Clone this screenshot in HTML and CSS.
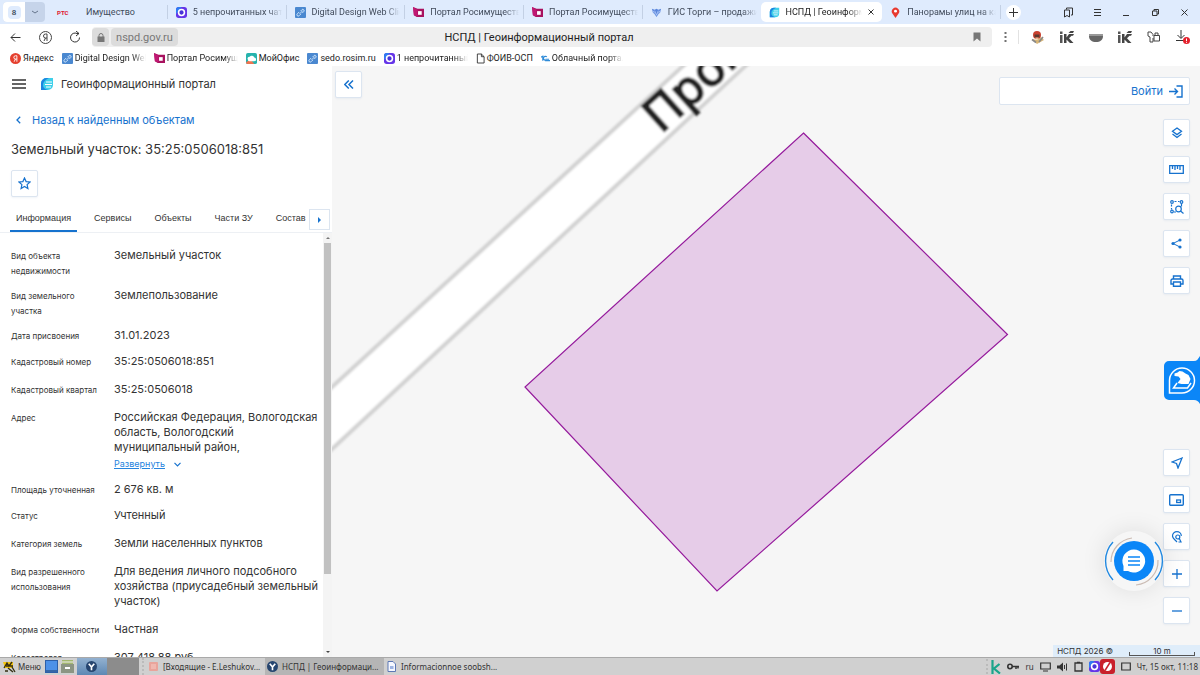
FILE: index.html
```html
<!DOCTYPE html>
<html lang="ru">
<head>
<meta charset="utf-8">
<title>НСПД | Геоинформационный портал</title>
<link rel="stylesheet" href="styles.css">
</head>
<body>
<svg class="defs" aria-hidden="true">
  <symbol id="i-link" viewBox="0 0 12 12"><rect width="12" height="12" rx="1" fill="#4a88d0"/><path d="M5 7.500l3.500-3.500M4.500 5.500L2.500 7.500a1.300 1.300 0 0 0 2 2l2-2M6 4.500l1.500-1.500a1.300 1.300 0 0 1 2 2L8 6.500" fill="none" stroke="#d8ebff"/></symbol>
  <symbol id="i-ros" viewBox="0 0 12 12"><path d="M0 0l5 2h7v9H4L1 9z" fill="#a8125f"/><path d="M5.500 4.500h4v4h-4z" fill="#fff"/><path d="M0 0l5 3v7L1 9z" fill="#c01873"/></symbol>
  <symbol id="i-chat" viewBox="0 0 12 12"><rect width="12" height="12" rx="3" fill="#6535e8"/><path d="M0 8V3a3 3 0 0 1 3-3h3z" fill="#2e7cf2"/><circle cx="6" cy="6" r="3.200" fill="#4833d8" stroke="#fff" stroke-width="1.700"/></symbol>
  <symbol id="i-nspd" viewBox="0 0 14 14"><path d="M1 13V6a5.500 5.500 0 0 1 5.500-5H13v7a5 5 0 0 1-5 5z" fill="#3fd0ea"/><path d="M1 13V6a5.500 5.500 0 0 1 5.500-5H9C5 3 3 5 3 8s2 4 5 5z" fill="#1d86e0"/><path d="M6 5h6M5 7.500h7M6 10h5" stroke="#fff" stroke-width="1"/></symbol>
  <symbol id="i-y" viewBox="0 0 12 12"><circle cx="6" cy="6" r="6" fill="#26456f"/><path d="M3 3l3 3.500L9 3M6 6v4" fill="none" stroke="#fff" stroke-width="1.800"/></symbol>
  <symbol id="i-k" viewBox="0 0 14 14"><path d="M0 5h2.500v8H0zM0 1.500h2.500V4H0z" fill="#555"/><path d="M4 4h2.500v3.500L9 4h5l-1 1.800h-1.500L9 8.300l4.500 4.700H10L6.500 9.500V13H4zM8.500 3l2-2H14l-1 2z" fill="#444"/></symbol>
</svg>

<header class="browser">
  <div class="tabbar">
    <div class="group"><button class="group-count"><span>8</span></button><button class="group-menu" aria-label="Список вкладок"><svg width="8" height="5" viewBox="0 0 8 5"><path d="M1 1l3 2 3-2" fill="none" stroke="#66758c"/></svg></button></div>
    <nav class="tabs" aria-label="Вкладки">
      <button class="tab"><span class="rts">РТС</span><span class="tab-text">Имущество</span></button>
      <button class="tab"><svg class="fav"><use href="#i-chat"/></svg><span class="tab-text fade">5 непрочитанных чатс</span></button>
      <button class="tab"><svg class="fav"><use href="#i-link"/></svg><span class="tab-text fade">Digital Design Web Clie</span></button>
      <button class="tab"><svg class="fav"><use href="#i-ros"/></svg><span class="tab-text fade">Портал Росимуществ</span></button>
      <button class="tab"><svg class="fav"><use href="#i-ros"/></svg><span class="tab-text fade">Портал Росимуществ</span></button>
      <button class="tab no-sep"><svg class="fav" viewBox="0 0 12 12"><path d="M1 2l3 1 2-1 2 1 3-1-1 4-2 2-2 3-2-3-2-2z" fill="#5a86dc"/><path d="M4 4l2 5 2-5M2 4l2 3M10 4L8 7" stroke="#cfe0ff" fill="none" stroke-width=".7"/></svg><span class="tab-text fade">ГИС Торги – продажи</span></button>
      <button class="tab active no-sep"><svg class="fav"><use href="#i-nspd"/></svg><span class="tab-text fade">НСПД | Геоинформ</span><svg width="6" height="6" viewBox="0 0 6 6"><path d="M.5.500l5 5M5.500.500l-5 5" stroke="#333"/></svg></button>
      <button class="tab"><svg class="fav" viewBox="0 0 12 12"><path d="M6 12L3 7.500a4 4 0 1 1 6 0z" fill="#e8392f"/><circle cx="6" cy="4.500" r="1.600" fill="#fff"/></svg><span class="tab-text fade">Панорамы улиц на кар</span></button>
    </nav>
    <button class="new-tab" aria-label="Новая вкладка"><svg width="9" height="9" viewBox="0 0 9 9"><path d="M4.500 0v9M0 4.500h9" stroke="#333"/></svg></button>
    <div class="window-buttons">
      <button aria-label="Коллекции"><svg width="11" height="11" viewBox="0 0 11 11"><path d="M3.500 2.500V1h6v7H8M1.500 3h5v7L4 8.500 1.500 10z" fill="none" stroke="#333"/></svg></button>
      <button aria-label="Меню"><svg width="9" height="9" viewBox="0 0 9 9"><path d="M1 1.500h7M1 4.500h7M1 7.500h7" stroke="#333"/></svg></button>
      <button aria-label="Свернуть"><svg width="9" height="9" viewBox="0 0 9 9"><path d="M1 7.500h6" stroke="#333"/></svg></button>
      <button aria-label="Восстановить"><svg width="9" height="9" viewBox="0 0 9 9"><path d="M1.500 3h4.500v4.500H1.500zM3 3V1.500h4.500V6H6" fill="none" stroke="#333"/></svg></button>
      <button aria-label="Закрыть"><svg width="9" height="9" viewBox="0 0 9 9"><path d="M1.500 1.500l6 6M7.500 1.500l-6 6" stroke="#333"/></svg></button>
    </div>
  </div>

  <div class="toolbar">
    <div class="nav-buttons">
      <button aria-label="Назад"><svg width="11" height="11" viewBox="0 0 11 11"><path d="M10.500 5.500H1M5 1.500l-4 4 4 4" fill="none" stroke="#333"/></svg></button>
      <button aria-label="Яндекс"><svg width="13" height="13" viewBox="0 0 13 13"><circle cx="6.500" cy="6.500" r="6" fill="none" stroke="#444"/><path d="M8 10V3H6.500a2 2 0 0 0 0 4H8M6.500 7L5 10" fill="none" stroke="#444"/></svg></button>
      <button aria-label="Обновить"><svg width="12" height="12" viewBox="0 0 12 12"><path d="M10.500 6.500A4.500 4.500 0 1 1 8 2.500h2M7 0l3 2.500L7 5" fill="none" stroke="#333"/></svg></button>
    </div>
    <div class="address">
      <button class="lock" aria-label="Защищённое соединение"><svg width="8" height="9" viewBox="0 0 8 9"><rect x=".5" y="3.500" width="7" height="5.500" fill="#777"/><path d="M2 4V2.500a2 2 0 0 1 4 0V4" fill="none" stroke="#777"/></svg></button>
      <button class="host">nspd.gov.ru</button>
      <span class="page-title">НСПД | Геоинформационный портал</span>
      <button class="save" aria-label="В закладки"><svg width="8" height="10" viewBox="0 0 8 10"><path d="M.5.500h7v9L4 6.500.5 9.500z" fill="#777"/></svg></button>
    </div>
    <button class="dots" aria-label="Ещё"><svg width="3" height="10" viewBox="0 0 3 10"><path d="M.5 1h2M.5 5h2M.5 9h2" stroke="#444" stroke-width="1.500"/></svg></button>
    <div class="extensions">
      <button aria-label="Расширение"><svg width="13" height="13" viewBox="0 0 13 13"><path d="M1 8l5 5 7-4-3-3-4 3z" fill="#d8b678"/><circle cx="6" cy="4" r="4" fill="#c9412f"/><path d="M3.500 3.500h5v3h-5z" fill="#5a3a30"/><path d="M4.500 6.500h3v2h-3z" fill="#e9b58c"/><path d="M1 8.500l4 3M8 11l4-5" stroke="#888" stroke-width="1.600"/></svg></button>
      <button aria-label="Защита"><svg width="14" height="14"><use href="#i-k"/></svg></button>
      <button aria-label="Маска"><svg width="14" height="9" viewBox="0 0 14 9"><path d="M0 1h14v2H0z" fill="#999"/><path d="M0 3h14c0 4-3 6-7 6S0 7 0 3z" fill="#666"/></svg></button>
      <button aria-label="Защита платежей"><svg width="14" height="14"><use href="#i-k"/></svg></button>
      <button aria-label="Расширения"><svg width="13" height="12" viewBox="0 0 13 12"><path d="M6 5V3.500L4 1H1v4l2 1v5h3V7M7 4.500h5.500V10H7zM8 4.500V2h3v2.500" fill="none" stroke="#444"/></svg></button>
      <button aria-label="Загрузки"><svg width="14" height="14" viewBox="0 0 14 14"><path d="M5 0v8M1.500 5L5 8.500 8.500 5M0 10.500h8" fill="none" stroke="#333"/><circle cx="10.500" cy="10.500" r="3.500" fill="#e4202c"/><path d="M10.500 8.500v2.500M10.500 11.800v1" stroke="#fff"/></svg></button>
    </div>
  </div>

  <nav class="bookmarks" aria-label="Закладки">
    <a href="#"><svg class="fav" viewBox="0 0 12 12"><circle cx="6" cy="6" r="6" fill="#e5402f"/><path d="M7.500 9.500V3H6a1.800 1.800 0 0 0 0 3.600h1.500M6 6.500L4.500 9.500" fill="none" stroke="#fff"/></svg><span>Яндекс</span></a>
    <a href="#"><svg class="fav"><use href="#i-link"/></svg><span class="cut fade">Digital Design Web</span></a>
    <a href="#"><svg class="fav"><use href="#i-ros"/></svg><span class="cut fade">Портал Росимущ</span></a>
    <a href="#"><svg class="fav" viewBox="0 0 12 12"><rect width="12" height="12" rx="2" fill="#26b3ad"/><path d="M0 10l5-3 4 5H2a2 2 0 0 1-2-2z" fill="#ee7450"/><path d="M2 7a2 2 0 0 1 2-3 3 3 0 0 1 5 1 2 2 0 0 1 0 4H4a2 2 0 0 1-2-2z" fill="#fff"/></svg><span>МойОфис</span></a>
    <a href="#"><svg class="fav"><use href="#i-link"/></svg><span>sedo.rosim.ru</span></a>
    <a href="#"><svg class="fav"><use href="#i-chat"/></svg><span class="cut fade">1 непрочитанный</span></a>
    <a href="#"><svg class="fav thin" viewBox="0 0 10 12"><path d="M1.500 1h4.500l3 3v7H1.500zM6 1v3h3" fill="none" stroke="#333"/></svg><span>ФОИВ-ОСП</span></a>
    <a href="#"><svg class="fav thin" viewBox="0 0 10 12"><path d="M0 4.500l2-1v5M5.500 8H5a2.200 2.200 0 1 1 1.500-3.800M4.500 8.300H10M5 6.800h4" fill="none" stroke="#2e8bd8" stroke-width="1.300"/></svg><span class="cut fade">Облачный портал</span></a>
  </nav>
</header>

<main class="workspace">
  <aside class="panel">
    <div class="panel-head">
      <div class="brand">
        <button class="burger" aria-label="Меню"><svg width="14" height="10" viewBox="0 0 14 10"><path d="M0 1h14M0 5h14M0 9h14" stroke="#333" stroke-width="1.500"/></svg></button>
        <svg class="logo" width="14" height="14"><use href="#i-nspd"/></svg>
        <span>Геоинформационный портал</span>
      </div>
      <a class="back" href="#"><svg width="5" height="8" viewBox="0 0 5 8"><path d="M4.200.800L1 4l3.200 3.200" fill="none" stroke="#1672ce" stroke-width="1.300"/></svg>Назад к найденным объектам</a>
      <h1>Земельный участок: 35:25:0506018:851</h1>
      <button class="tile" aria-label="В избранное"><svg width="13" height="13" viewBox="0 0 13 13"><path d="M6.500 1l1.600 3.600 3.900.400-2.900 2.600.8 3.900-3.400-2-3.400 2 .8-3.900L1 5l3.900-.400z" fill="none" stroke="#1672ce" stroke-width="1.200"/></svg></button>
    </div>
    <div class="sections">
      <button class="section current">Информация</button>
      <button class="section">Сервисы</button>
      <button class="section">Объекты</button>
      <button class="section">Части ЗУ</button>
      <button class="section last">Состав</button>
      <button class="more" aria-label="Дальше"><svg width="3" height="6" viewBox="0 0 3 6"><path d="M0 0l3 3-3 3z" fill="#1672ce"/></svg></button>
    </div>
    <div class="scroll">
      <dl class="facts">
        <div><dt>Вид объекта недвижимости</dt><dd>Земельный участок</dd></div>
        <div><dt>Вид земельного участка</dt><dd>Землепользование</dd></div>
        <div class="compact"><dt>Дата присвоения</dt><dd>31.01.2023</dd></div>
        <div><dt>Кадастровый номер</dt><dd>35:25:0506018:851</dd></div>
        <div><dt>Кадастровый квартал</dt><dd>35:25:0506018</dd></div>
        <div class="compact"><dt>Адрес</dt><dd>Российская Федерация, Вологодская область, Вологодский<br>муниципальный район,<a class="expand" href="#"><span>Развернуть</span><svg width="7" height="5" viewBox="0 0 7 5"><path d="M.5.800l3 3 3-3" fill="none" stroke="#1672ce" stroke-width="1.200"/></svg></a></dd></div>
        <div class="compact"><dt>Площадь уточненная</dt><dd>2 676 кв. м</dd></div>
        <div><dt>Статус</dt><dd>Учтенный</dd></div>
        <div><dt>Категория земель</dt><dd>Земли населенных пунктов</dd></div>
        <div><dt>Вид разрешенного использования</dt><dd>Для ведения личного подсобного хозяйства (приусадебный земельный участок)</dd></div>
        <div><dt>Форма собственности</dt><dd>Частная</dd></div>
        <div><dt>Кадастровая стоимость</dt><dd>307 418.88 руб.</dd></div>
      </dl>
      <div class="scrollbar" aria-hidden="true"><i class="up"></i><i class="thumb"></i><i class="down"></i></div>
    </div>
  </aside>

  <section class="map" aria-label="Карта">
    <svg class="canvas" viewBox="332 66 868 591" preserveAspectRatio="xMinYMin slice">
      <defs><filter id="soft"><feGaussianBlur stdDeviation="0.900"/></filter></defs>
      <g filter="url(#soft)">
        <path d="M320 398L700 50.500 762 50.500 320 460z" fill="#fff" stroke="#d2d2d2" stroke-width="4"/>
        <text class="street" transform="translate(661 134) rotate(-42)">Пром</text>
      </g>
      <path d="M803.500 133L1007.500 334.500 717 591 525 387z" fill="#e6cce8" stroke="#951a9c" stroke-width="1.200"/>
    </svg>
    <button class="tile collapse" aria-label="Свернуть панель"><svg width="10" height="9" viewBox="0 0 10 9"><path d="M4.800.500l-4 4 4 4M9 .500l-4 4 4 4" fill="none" stroke="#1672ce" stroke-width="1.500"/></svg></button>
    <div class="controls">
      <button class="login">Войти<svg width="14" height="13" viewBox="0 0 14 13"><path d="M7.500 1H13v11H7.500M0 6.500h8.500M5.500 3.500l3 3-3 3" fill="none" stroke="#1672ce" stroke-width="1.400"/></svg></button>
      <div class="stack">
        <button class="tile" aria-label="Слои"><svg width="12" height="12" viewBox="0 0 12 12"><path d="M6 1l4.500 3.300L6 7.600 1.500 4.300zM1.500 7L6 10.500 10.500 7" fill="none" stroke="#1672ce" stroke-width="1.300"/></svg></button>
        <button class="tile" aria-label="Измерения"><svg width="15" height="9" viewBox="0 0 15 9"><path d="M.7.700h13.600v7.600H.7zM3.500 1v3M6 1v4M8.500 1v3M11 1v4" fill="none" stroke="#1672ce" stroke-width="1.300"/></svg></button>
        <button class="tile" aria-label="Поиск по области"><svg width="14" height="14" viewBox="0 0 14 14"><g fill="none" stroke="#1672ce" stroke-width="1.200"><circle cx="2" cy="2" r="1.300"/><circle cx="11.500" cy="2" r="1.300"/><circle cx="2" cy="11.500" r="1.300"/><path d="M4.500 1.500h2M8 1.500h1.500M1.500 4.500v2M1.500 8v1.500M11.500 4v2.500M4 12h2"/><circle cx="8.500" cy="9" r="2.800"/><path d="M10.500 11l3 2.500"/></g></svg></button>
        <button class="tile" aria-label="Поделиться"><svg width="11" height="11" viewBox="0 0 11 11"><path d="M9 2L2 5.500 9 9" fill="none" stroke="#1672ce"/><g fill="#1672ce"><circle cx="9" cy="2" r="1.600"/><circle cx="2" cy="5.500" r="1.600"/><circle cx="9" cy="9" r="1.600"/></g></svg></button>
        <button class="tile" aria-label="Печать"><svg width="14" height="12" viewBox="0 0 14 12"><path d="M3.500 4V1h7v3M3.500 9H1V5.500A1.500 1.500 0 0 1 2.500 4h9A1.500 1.500 0 0 1 13 5.500V9h-2.500M3.500 7h7v4.300h-7z" fill="none" stroke="#1672ce" stroke-width="1.400"/></svg></button>
      </div>
      <div class="stack lower">
        <button class="tile" aria-label="Моё местоположение"><svg width="12" height="12" viewBox="0 0 12 12"><path d="M11 1L1 5l4.500 1.500L7 11z" fill="none" stroke="#1672ce" stroke-width="1.300"/></svg></button>
        <button class="tile" aria-label="Обзорная карта"><svg width="15" height="12" viewBox="0 0 15 12"><rect x=".7" y=".7" width="13.600" height="10.600" rx="1" fill="none" stroke="#1672ce" stroke-width="1.400"/><rect x="7.700" y="6" width="3.800" height="2.500" fill="none" stroke="#1672ce" stroke-width="1.300"/></svg></button>
        <button class="tile" aria-label="Поиск на карте"><svg width="12" height="12" viewBox="0 0 12 12"><path d="M6 11C3 8 1.500 7 1.500 5a4.400 4.400 0 0 1 8.800 0" fill="none" stroke="#1672ce" stroke-width="1.200"/><circle cx="6.800" cy="6" r="2" fill="none" stroke="#1672ce" stroke-width="1.200"/><path d="M8.300 7.500l1.700 3.500H7.500" fill="none" stroke="#1672ce" stroke-width="1.200"/></svg></button>
        <button class="tile" aria-label="Приблизить"><svg width="10" height="10" viewBox="0 0 10 10"><path d="M5 0v10M0 5h10" stroke="#1672ce" stroke-width="1.300"/></svg></button>
        <button class="tile" aria-label="Отдалить"><svg width="10" height="10" viewBox="0 0 10 10"><path d="M0 5h10" stroke="#1672ce" stroke-width="1.300"/></svg></button>
      </div>
    </div>
    <button class="assistant" aria-label="Помощник"><svg width="37" height="48" viewBox="0 0 37 48"><path d="M37 0v48c-2-3-3-4-6-4H6a5 5 0 0 1-5-5V10a5 5 0 0 1 5-5h25c3 0 4-2 6-5z" fill="#0b86f7"/><path d="M6.500 37V24.500A12.500 12.500 0 1 1 19 37z" fill="none" stroke="#fff" stroke-width="1.500"/><path d="M11.500 17.500l3-1 2-1.500 3 .5 3 2 3 1.500 2 4-2 5h-7l-4-1 3-4-2-2.500-4-.5z" fill="#fff"/><path d="M14 27l-3.500 5h14l3.500-5" fill="none" stroke="#fff" stroke-width="1.500"/></svg></button>
    <button class="chat" aria-label="Чат поддержки"><svg width="60" height="60" viewBox="0 0 60 60"><g fill="none"><path d="M9 11a28 28 0 0 0 0 38M51 11a28 28 0 0 1 0 38" stroke="#2289e0" stroke-width="1.400"/><path d="M7 31A24 24 0 0 1 28 7M54 29A24 24 0 0 1 32 54" stroke="#cbbcb4" stroke-width="1.200"/></g><circle cx="30" cy="30" r="20" fill="#0b86f7"/><path d="M30 18.500a11.500 11.500 0 1 1-6 21.500h-4.500v-5A11.500 11.500 0 0 1 30 18.500z" fill="#fff"/><path d="M24 26h12M24 30h12M24 34h12" stroke="#0b86f7" stroke-width="1.600"/></svg></button>
    <div class="attribution"><span>НСПД 2026 ©</span><span class="scale">10 m</span></div>
  </section>
</main>

<footer class="taskbar">
  <button class="start"><svg width="13" height="13" viewBox="0 0 13 13"><path d="M0 2h10v6H2z" fill="#f1c40f"/><path d="M1 8l3-5 2 3 3-4M3 6h7M5 8l5 4M9 7l3 5M2 11h3" stroke="#332c10" stroke-width="1.300" fill="none"/></svg>Меню</button>
  <button class="quick" aria-label="Рабочий стол"><svg width="13" height="13" viewBox="0 0 13 13"><rect x=".5" y=".5" width="12" height="12" fill="#4c91e8" stroke="#2c5fa8"/><path d="M1 11h11" stroke="#1f3d66"/></svg></button>
  <button class="quick" aria-label="Файлы"><svg width="13" height="13" viewBox="0 0 13 13"><path d="M1 0h11v5H1z" fill="#a3b76f"/><path d="M1 2h11" stroke="#eee"/><path d="M0 4h13v9H0z" fill="#8c9583"/><path d="M4 8h5" stroke="#fff" stroke-width="2"/></svg></button>
  <button class="pinned" aria-label="Яндекс Браузер"><svg width="11" height="11"><use href="#i-y"/></svg></button>
  <span class="gap"></span>
  <div class="windows">
    <button class="window"><svg width="11" height="11" viewBox="0 0 11 11"><rect x="1" y="1" width="9" height="9" rx="1" fill="#e9a49b"/><path d="M3 3h5v5H3z" fill="#f0b8b0"/></svg>[Входящие - E.Leshukov...</button>
    <button class="window focused"><svg width="11" height="11"><use href="#i-y"/></svg>НСПД | Геоинформаци...</button>
    <button class="window"><svg width="11" height="11" viewBox="0 0 11 11"><path d="M2 .500h5l2.500 2.500v7.500H2z" fill="#f6f8ff" stroke="#5d78b5"/><path d="M4 5h3.500v3H4z" fill="#9db4e2"/></svg>Informacionnoe soobsh...</button>
  </div>
  <div class="tray">
    <svg width="10" height="14" viewBox="0 0 10 14"><path d="M1.500 0v14M8.500 4L3 8.500 9 13.500" fill="none" stroke="#1aa58b" stroke-width="2.200"/></svg>
    <svg width="12" height="7" viewBox="0 0 12 7"><circle cx="3" cy="3.500" r="2.200" fill="none" stroke="#333" stroke-width="1.600"/><path d="M5 3.500h7M9 3.500v2.500M11 3.500v2" stroke="#333" stroke-width="1.500"/></svg>
    <span class="lang">ru</span>
    <svg width="11" height="10" viewBox="0 0 11 10"><path d="M.7 1h9.600v6H.7zM3 9h5" fill="none" stroke="#333" stroke-width="1.200"/></svg>
    <svg width="11" height="10" viewBox="0 0 11 10"><path d="M0 3.500h2.500L6 .500v9L2.500 6.500H0z" fill="#333"/><path d="M7.500 3v4M9.500 1.500v7" stroke="#333"/></svg>
    <svg width="9" height="11" viewBox="0 0 9 11"><path d="M1 2h7v8H1zM3 1.500h3" fill="none" stroke="#333" stroke-width="1.300"/></svg>
    <span class="pair"><svg width="11" height="11"><use href="#i-chat"/></svg><svg width="15" height="15" viewBox="0 0 15 15"><rect width="15" height="15" rx="3" fill="#c9202b"/><circle cx="7.500" cy="7.500" r="4.500" fill="#fff"/><path d="M10 3.500l-5 8" stroke="#c9202b" stroke-width="1.500"/></svg></span>
    <svg width="10" height="9" viewBox="0 0 10 9"><path d="M.7 1h8.600v7H.7zM3 .500v1M7 .500v1" fill="none" stroke="#333" stroke-width="1.200"/></svg>
    <span class="clock">Чт, 15 окт, 11:18</span>
  </div>
</footer>
</body>
</html>
```

FILE: styles.css
```css
* { box-sizing: border-box; }
body {
  margin: 0;
  height: 100vh;
  display: flex;
  flex-direction: column;
  overflow: hidden;
  color: #333;
  font-family: Roboto, sans-serif;
  font-size: 9px;
}
button {
  display: flex;
  align-items: center;
  justify-content: center;
  padding: 0;
  border: 0;
  background: none;
  color: inherit;
  font: inherit;
}
a { color: inherit; text-decoration: none; }
svg { flex: none; }
.defs { position: absolute; width: 0; height: 0; }
.fav { width: 11px; height: 11px; }
.fav.thin { width: 9px; }
.fade { -webkit-mask-image: linear-gradient(to left, transparent, #000 14px); mask-image: linear-gradient(to left, transparent, #000 14px); }

/* Browser chrome */
.browser { flex: none; background: #fff; }
.tabbar { display: flex; align-items: center; height: 24px; background: #dfebfd; color: #414b5b; }
.group { display: flex; margin: 0 4px 0 3px; height: 20px; border-radius: 4px; overflow: hidden; background: #c6d4ea; }
.group-count { width: 22px; background: #fff; }
.group-count span { width: 13px; line-height: 13px; border-radius: 4px; background: #dfebfd; font-size: 8px; font-weight: 600; }
.group-menu { width: 20px; }
.tabs { display: flex; flex: 0 1 952px; min-width: 0; height: 24px; align-items: center; }
.tab { flex: 1 1 0; min-width: 0; height: 20px; padding: 0 4px 0 8px; gap: 6px; justify-content: flex-start; }
.tab:not(.no-sep) { border-right: 1px solid transparent; border-image: linear-gradient(transparent 20%, #c3d0e4 20% 80%, transparent 80%) 1; }
.tab.active { padding-right: 8px; background: #fff; border-radius: 5px; color: #222; }
.tab-text { flex: 1; min-width: 0; overflow: hidden; white-space: nowrap; text-align: left; }
.rts { width: 23px; color: #e02030; font-size: 6px; font-weight: 800; text-align: left; }
.new-tab { width: 15px; height: 15px; margin-left: 5px; border-radius: 50%; background: #fff; }
.window-buttons { display: flex; margin: 0 1px 0 auto; }
.window-buttons button { width: 29px; height: 24px; }
.toolbar { display: flex; align-items: center; height: 26px; }
.nav-buttons { display: flex; width: 92px; }
.nav-buttons button { width: 30px; height: 20px; }
.address { flex: 1; display: flex; align-items: center; gap: 2px; height: 20px; border-radius: 4px; background: #efefef; }
.lock { width: 17px; height: 18px; border-radius: 4px; background: #dcdcdc; }
.host { width: 67px; height: 18px; border-radius: 4px; background: #dcdcdc; color: #777; font-size: 11px; }
.page-title { flex: 1; text-align: center; color: #222; font-size: 11px; padding-right: 62px; }
.save { width: 30px; }
.dots { width: 27px; height: 14px; border-right: 1px solid #e2e2e2; }
.extensions { display: flex; padding: 0 3px 0 4px; }
.extensions button { width: 29px; height: 20px; }
.bookmarks { display: flex; align-items: center; gap: 8px; height: 16px; padding-left: 10px; color: #222; }
.bookmarks a { display: flex; align-items: center; gap: 2px; white-space: nowrap; }
.cut { width: 71px; overflow: hidden; }

/* Object panel */
.workspace { flex: 1; min-height: 0; display: flex; font-family: Inter, sans-serif; }
.panel { flex: none; width: 332px; display: flex; flex-direction: column; background: #fff; font-size: 11px; }
.panel-head { display: flex; flex-direction: column; align-items: flex-start; padding: 9px 11px 0; }
.brand { display: flex; align-items: center; height: 18px; }
.burger { width: 16px; height: 16px; margin-right: 13px; }
.logo { margin-right: 7px; }
.back { display: flex; align-items: center; gap: 11px; margin-top: 19px; padding-left: 5px; line-height: 16px; color: #1672ce; }
h1 { margin: 12px 0; font-size: 13px; font-weight: 400; line-height: 18px; }
.tile { width: 27px; height: 27px; border: 1px solid #dce5f0; border-radius: 2px; background: #fff; box-shadow: 0 1px 2px #c7d5e640; }
.sections { display: flex; gap: 11px; margin-top: 9px; padding-left: 10px; border-bottom: 1px solid #edf0f4; font-family: "Liberation Sans", sans-serif; font-size: 9px; }
.section { height: 26px; padding: 0 6px; border-bottom: 2px solid transparent; white-space: nowrap; }
.section.current { border-bottom-color: #1672ce; }
.section.last { padding-right: 0; }
.more { flex: none; width: 21px; height: 21px; margin: 3px 0 0 -8px; border: 1px solid #dce5f0; background: #fff; }
.scroll { flex: 1; min-height: 0; display: flex; overflow: hidden; }
.facts { flex: 1; margin: 0; padding: 15px 2px 0 11px; }
.facts > div { display: grid; grid-template-columns: 94px 1fr; column-gap: 9px; line-height: 15px; }
dt { padding: 1px 0 9px; font-size: 8px; }
dd { margin: 0; padding-bottom: 13px; }
.compact dd { padding-bottom: 11px; }
.expand { display: flex; align-items: center; gap: 9px; padding-top: 2px; line-height: 14px; color: #2684de; font-size: 9px; }
.expand span { text-decoration: underline; }
.scrollbar { flex: none; width: 9px; display: flex; flex-direction: column; align-items: center; background: #f4f4f4; }
.scrollbar i { display: block; }
.up, .down { border: 2px solid transparent; }
.up { margin: 2px 0 4px; border-bottom-color: #777; }
.down { margin: auto 0 2px; border-top-color: #444; }
.thumb { flex: 0 0 78%; width: 7px; background: #c1c1c1; }

/* Map */
.map { position: relative; flex: 1; min-width: 0; overflow: hidden; background: #f6f6f6; color: #333; }
.canvas { position: absolute; inset: 0; width: 100%; height: 100%; }
.street { font-family: "DejaVu Sans", sans-serif; font-size: 46px; fill: #222; stroke: #222; stroke-width: 2px; }
.collapse { position: absolute; left: 3px; top: 5px; }
.controls { position: absolute; top: 11px; right: 10px; bottom: 33px; display: flex; flex-direction: column; align-items: flex-end; }
.login { width: 191px; height: 28px; gap: 6px; padding-right: 6px; justify-content: flex-end; border: 1px solid #dce5f0; border-radius: 2px; background: #fff; color: #1672ce; font-size: 11px; }
.stack { display: flex; flex-direction: column; gap: 10px; margin-top: 14px; }
.lower { margin-top: auto; }
.assistant { position: absolute; right: 0; top: 290px; }
.chat { position: absolute; right: 36px; bottom: 66px; border-radius: 50%; box-shadow: 0 0 24px #0000001a; }
.attribution { position: absolute; right: 0; bottom: 0; display: flex; align-items: center; gap: 16px; height: 12px; padding: 0 5px 0 4px; background: #dfedfa; font-size: 8px; line-height: 10px; }
.scale { width: 66px; height: 10px; text-align: center; border: solid #555; border-width: 0 1px 1px; border-image: linear-gradient(transparent 60%, #555 60%) 1; }

/* Desktop taskbar */
.taskbar { flex: none; display: flex; align-items: center; height: 18px; background: #d0d0d0; border-top: 1px solid #a9a9a9; font-family: "Noto Sans", sans-serif; font-size: 8px; }
.start { gap: 2px; margin: 0 4px 0 3px; }
.quick { width: 13px; margin-right: 3px; }
.pinned { width: 30px; height: 17px; background: linear-gradient(#93b1d0, #5e88b4); }
.gap { width: 32px; height: 17px; background: #8c8c8c; }
.windows { display: flex; flex: 1; min-width: 0; margin-left: 3px; padding-left: 2px; border-left: 2px dotted #bbb; }
.window { flex: 0 1 119px; height: 17px; gap: 4px; padding-left: 2px; justify-content: flex-start; white-space: nowrap; overflow: hidden; }
.window.focused { background: #b5b5b5; }
.tray { display: flex; align-items: center; gap: 6px; padding: 0 2px 0 3px; border-left: 2px dotted #bbb; }
.pair { display: flex; align-items: center; }
.clock { white-space: nowrap; }
```
